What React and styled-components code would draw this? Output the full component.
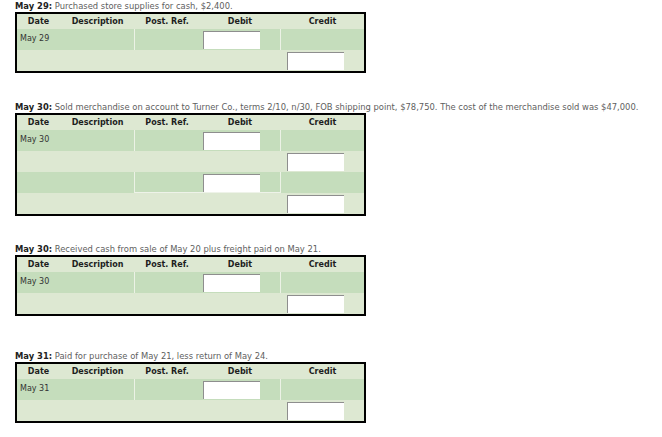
import React from "react";
import styled, { createGlobalStyle } from "styled-components";

const Global = createGlobalStyle`
  html, body { margin: 0; padding: 0; background: #fff; }
  body { font-family: "DejaVu Sans", Verdana, sans-serif; }
`;

const Page = styled.div`
  padding: 1px 0 0 15px;
  display: flex;
  flex-direction: column;
`;

const Block = styled.section`
  display: flex;
  flex-direction: column;
  margin-bottom: ${(p) => p.$gap}px;
`;

const Title = styled.div`
  font-size: 8.4px;
  line-height: 11px;
  height: 11px;
  color: #5e5e5e;
  white-space: nowrap;
  b { color: #222; font-weight: bold; }
`;

const Journal = styled.div`
  width: 351px;
  box-sizing: border-box;
  border: 2px solid #000;
  display: flex;
  flex-direction: column;
  background: #dde8d2;
`;

const HeaderRow = styled.div`
  display: grid;
  grid-template-columns: 43px 75px 64px 82px 1fr;
  height: 15px;
  align-items: center;
  background: #dde8d2;
`;

const HeadCell = styled.div`
  text-align: center;
  font-size: 8px;
  font-weight: bold;
  color: #1e1e1e;
  white-space: nowrap;
`;

const Row = styled.div`
  display: grid;
  grid-template-columns: 117px 145px 1fr;
  column-gap: 1px;
  height: 21px;
  background: ${(p) => (p.$debit ? "#ecf2e6" : "#dde8d2")};
`;

const Cell = styled.div`
  background: ${(p) => (p.$debit ? "#c5ddbc" : "#dde8d2")};
  display: flex;
  align-items: ${(p) => (p.$input ? "flex-start" : "center")};
  padding: ${(p) => (p.$input ? "2px 0 0" : "0")} ${(p) => p.$pad || 0}px;
  box-sizing: border-box;
  font-size: 8px;
  color: #333;
  box-shadow: ${(p) => (p.$underline ? "inset 0 -1px 0 #eef3e9" : "none")};
`;

const DateText = styled.span`
  padding-left: 3px;
  padding-bottom: 2px;
`;

const Amount = styled.input`
  width: 57px;
  height: 18px;
  box-sizing: border-box;
  margin: 0;
  padding: 0 2px;
  border: none;
  border-top: 1px solid #8e8e8e;
  border-left: 1px solid #8e8e8e;
  background: #fff;
  outline: none;
  font-size: 8px;
`;

const DebitRow = ({ date, underline }) => (
  <Row $debit>
    <Cell $debit>
      <DateText>{date}</DateText>
    </Cell>
    <Cell $debit $input $pad={68} $underline={underline}>
      <Amount />
    </Cell>
    <Cell $debit />
  </Row>
);

const CreditRow = () => (
  <Row>
    <Cell />
    <Cell />
    <Cell $input $pad={6}>
      <Amount />
    </Cell>
  </Row>
);

const entries = [
  {
    label: "May 29:",
    text: " Purchased store supplies for cash, $2,400.",
    rows: [{ type: "d", date: "May 29" }, { type: "c" }],
    gap: 29,
  },
  {
    label: "May 30:",
    text:
      " Sold merchandise on account to Turner Co., terms 2/10, n/30, FOB shipping point, $78,750. The cost of the merchandise sold was $47,000.",
    rows: [
      { type: "d", date: "May 30" },
      { type: "c" },
      { type: "d", date: "", underline: true },
      { type: "c" },
    ],
    gap: 28,
  },
  {
    label: "May 30:",
    text: " Received cash from sale of May 20 plus freight paid on May 21.",
    rows: [{ type: "d", date: "May 30" }, { type: "c" }],
    gap: 35,
  },
  {
    label: "May 31:",
    text: " Paid for purchase of May 21, less return of May 24.",
    rows: [{ type: "d", date: "May 31" }, { type: "c" }],
    gap: 0,
  },
];

export default function App() {
  return (
    <>
      <Global />
      <Page>
        {entries.map((e, i) => (
          <Block key={i} $gap={e.gap}>
            <Title>
              <b>{e.label}</b>
              {e.text}
            </Title>
            <Journal>
              <HeaderRow>
                <HeadCell>Date</HeadCell>
                <HeadCell>Description</HeadCell>
                <HeadCell>Post. Ref.</HeadCell>
                <HeadCell>Debit</HeadCell>
                <HeadCell>Credit</HeadCell>
              </HeaderRow>
              {e.rows.map((r, j) =>
                r.type === "d" ? (
                  <DebitRow key={j} date={r.date} underline={r.underline} />
                ) : (
                  <CreditRow key={j} />
                )
              )}
            </Journal>
          </Block>
        ))}
      </Page>
    </>
  );
}
